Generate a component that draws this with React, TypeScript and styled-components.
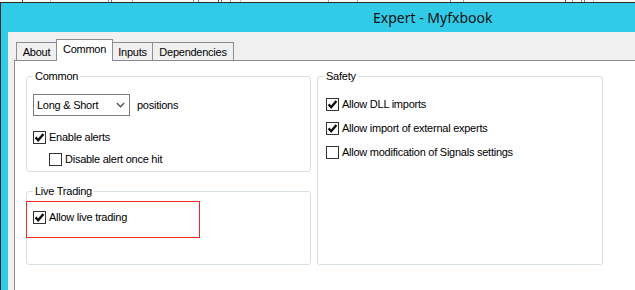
import React from 'react';
import styled, { createGlobalStyle } from 'styled-components';

const Global = createGlobalStyle`
  html, body { margin: 0; padding: 0; background: #fff; overflow: hidden; }
  body { width: 635px; height: 290px; font-family: "Liberation Sans", Arial, sans-serif; }
  * { box-sizing: border-box; }
`;

const marks: [number, string][] = [
  [22, '#8a2020'], [50, '#b8b8b8'], [108, '#a0a0a0'], [111, '#4a7ad0'], [132, '#b0b0b0'],
  [193, '#a0a0a0'], [198, '#4a7ad0'], [218, '#a03030'], [221, '#4a7ad0'], [230, '#a0a0a0'],
  [240, '#c0c0c0'], [328, '#a0a0a0'], [357, '#b0b0b0'], [450, '#4a7ad0'], [463, '#a0a0a0'],
  [565, '#b03030'], [572, '#a0a0a0'], [581, '#d08030'], [584, '#4a7ad0'], [593, '#c0c0c0'],
];
const markBg = marks.map(([x, c]) => `linear-gradient(${c}, ${c}) ${x}px 0 / 1px 100% no-repeat`).join(', ');

const Screen = styled.div`
  width: 635px;
  height: 290px;
  overflow: hidden;
  display: flex;
  flex-direction: column;
  background: #fff;
  font-size: 11px;
  letter-spacing: -0.25px;
  color: #000;
`;

const BehindStrip = styled.div`
  height: 2px;
  flex: none;
  background: ${markBg}, #fff;
`;

const Window = styled.div`
  flex: 1;
  min-height: 0;
  display: flex;
  flex-direction: column;
  background: #31cbe8;
  border-top: 1px solid #2b2b2b;
  border-left: 1px solid #2b2b2b;
  padding-left: 7px;
`;

const TitleBar = styled.div`
  height: 29px;
  flex: none;
  display: flex;
  align-items: center;
  padding-left: 365px;
  font-family: "Noto Sans", "Open Sans", sans-serif;
  font-size: 14px;
  letter-spacing: 0;
  color: #111;
`;

const Client = styled.div`
  flex: 1;
  min-height: 0;
  display: flex;
  flex-direction: column;
  background: #f0f0f0;
  padding: 7px 0 0 6px;
`;

const TabStrip = styled.div`
  height: 21px;
  flex: none;
  display: flex;
  align-items: flex-end;
  padding-left: 2px;
`;

const Tab = styled.div<{ $w: number; $active?: boolean }>`
  width: ${p => p.$w}px;
  height: ${p => (p.$active ? 22 : 18)}px;
  margin-left: -1px;
  margin-bottom: ${p => (p.$active ? -1 : 0)}px;
  position: relative;
  z-index: ${p => (p.$active ? 2 : 1)};
  border: 1px solid #8c8e94;
  border-bottom: none;
  background: ${p => (p.$active ? '#fff' : '#f0f0f0')};
  text-align: center;
  line-height: 13px;
  padding-top: 3px;
  white-space: nowrap;
  &:first-child { margin-left: 0; }
`;

const Panel = styled.div`
  flex: 1;
  min-height: 0;
  background: #fff;
  border-top: 1px solid #898c95;
  border-left: 1px solid #898c95;
  padding: 9px 0 0 11px;
`;

const Groups = styled.div`
  display: grid;
  grid-template-columns: 285px 286px;
  grid-template-rows: auto auto;
  column-gap: 6px;
  row-gap: 13px;
`;

const Group = styled.fieldset<{ $span?: boolean }>`
  margin: 0;
  padding: 0;
  min-width: 0;
  border: 1px solid #d5dfe5;
  border-radius: 3px;
  grid-row: ${p => (p.$span ? '1 / span 2' : 'auto')};
  grid-column: ${p => (p.$span ? '2' : '1')};
`;

const Legend = styled.legend`
  margin-left: 6px;
  padding: 0 2px;
  height: 13px;
  line-height: 13px;
`;

const GroupBody = styled.div<{ $pl: number; $pt: number; $pb: number }>`
  display: flex;
  flex-direction: column;
  align-items: flex-start;
  padding: ${p => p.$pt}px 0 ${p => p.$pb}px ${p => p.$pl}px;
`;

const SelectRow = styled.div`
  display: flex;
  align-items: center;
  gap: 7px;
`;

const Dropdown = styled.div`
  width: 97px;
  height: 22px;
  border: 1px solid #7a7a7a;
  background: #fff;
  display: flex;
  align-items: center;
  justify-content: space-between;
  padding: 0 4px 0 3px;
`;

const CheckRow = styled.label<{ $top: number; $indent?: number }>`
  display: flex;
  align-items: center;
  margin-top: ${p => p.$top}px;
  margin-left: ${p => p.$indent || 0}px;
  line-height: 13px;
  white-space: nowrap;
`;

const Box = styled.span`
  width: 13px;
  height: 13px;
  flex: none;
  border: 1px solid #333;
  background: #fff;
  display: flex;
  align-items: center;
  justify-content: center;
  margin-right: 3px;
`;

const Highlight = styled.div`
  width: 174px;
  height: 37px;
  margin-left: -1px;
  box-shadow: inset 0 0 0 1px #ec2a20;
  padding: 10px 0 0 7px;
`;

const Check = ({ on }: { on?: boolean }) => (
  <Box>
    {on && (
      <svg width="11" height="11" viewBox="0 0 11 11">
        <path d="M1.6 5.4 L4.2 8.2 L9.4 2.0" fill="none" stroke="#111" strokeWidth="2.4" strokeLinejoin="miter" />
      </svg>
    )}
  </Box>
);

const Chevron = () => (
  <svg width="9" height="6" viewBox="0 0 9 6">
    <path d="M0.8 1 L4.5 4.8 L8.2 1" fill="none" stroke="#555" strokeWidth="1.4" />
  </svg>
);

export default function App() {
  return (
    <Screen>
      <Global />
      <BehindStrip />
      <Window>
        <TitleBar>Expert - Myfxbook</TitleBar>
        <Client>
          <TabStrip>
            <Tab $w={41}>About</Tab>
            <Tab $w={57} $active>Common</Tab>
            <Tab $w={41}>Inputs</Tab>
            <Tab $w={82}>Dependencies</Tab>
          </TabStrip>
          <Panel>
            <Groups>
              <Group>
                <Legend>Common</Legend>
                <GroupBody $pl={6} $pt={11} $pb={5}>
                  <SelectRow>
                    <Dropdown>
                      <span>Long &amp; Short</span>
                      <Chevron />
                    </Dropdown>
                    <span>positions</span>
                  </SelectRow>
                  <CheckRow $top={15}><Check on />Enable alerts</CheckRow>
                  <CheckRow $top={9} $indent={16}><Check />Disable alert once hit</CheckRow>
                </GroupBody>
              </Group>
              <Group>
                <Legend>Live Trading</Legend>
                <GroupBody $pl={0} $pt={3} $pb={26}>
                  <Highlight>
                    <CheckRow $top={0}><Check on />Allow live trading</CheckRow>
                  </Highlight>
                </GroupBody>
              </Group>
              <Group $span>
                <Legend>Safety</Legend>
                <GroupBody $pl={8} $pt={15} $pb={0}>
                  <CheckRow $top={0}><Check on />Allow DLL imports</CheckRow>
                  <CheckRow $top={11}><Check on />Allow import of external experts</CheckRow>
                  <CheckRow $top={11}><Check />Allow modification of Signals settings</CheckRow>
                </GroupBody>
              </Group>
            </Groups>
          </Panel>
        </Client>
      </Window>
    </Screen>
  );
}
